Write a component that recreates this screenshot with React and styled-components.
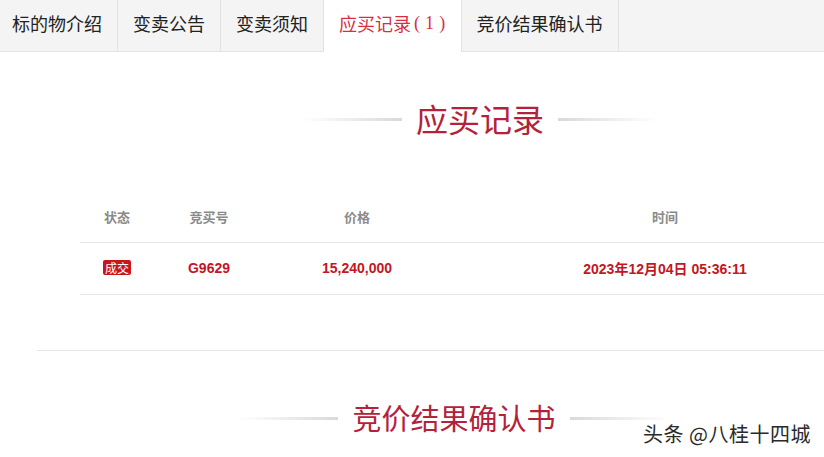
import React from "react";
import styled, { createGlobalStyle } from "styled-components";

const Global = createGlobalStyle`
  html, body { margin: 0; padding: 0; background: #fff; }
  body { font-family: "Microsoft YaHei", "Noto Sans CJK SC", "Liberation Sans", sans-serif; overflow: hidden; }
`;

const Page = styled.div`
  position: relative;
  width: 824px;
  height: 457px;
  overflow: hidden;
  background: #fff;
`;

const TabBar = styled.div`
  display: flex;
  height: 51px;
  background: #f4f4f4;
  border-bottom: 1px solid #e4e4e4;
  width: 900px;
`;

const Tab = styled.div`
  display: flex;
  align-items: center;
  padding: ${(p) => (p.$first ? "0 15px 6px 12px" : "0 15px 6px")};
  box-sizing: border-box;
  height: 52px;
  margin-bottom: -1px;
  font-size: 18px;
  color: ${(p) => (p.$active ? "#d62f3f" : "#222")};
  background: ${(p) => (p.$active ? "#fff" : "transparent")};
  border-right: 1px solid #e2e2e2;
  white-space: nowrap;
`;

const Count = styled.span`
  font-family: "Liberation Serif", serif;
  font-size: 18px;
  margin-left: 3px;
  letter-spacing: 0.3px;
  white-space: pre;
`;

const Content = styled.div`
  margin-left: 37px;
  width: 886px;
`;

const Heading = styled.div`
  display: flex;
  align-items: center;
  justify-content: center;
  gap: 14px;
  height: 32px;
  padding-top: 50px;
  padding-right: ${(p) => p.$shift || 0}px;
`;

const HeadLine = styled.span`
  width: 100px;
  height: 3px;
  margin-top: 2px;
  background: linear-gradient(
    ${(p) => (p.$right ? "to left" : "to right")},
    rgba(220, 220, 220, 0),
    #d9d9d9
  );
`;

const HeadText = styled.h2`
  margin: 0;
  font-weight: normal;
  font-size: ${(p) => p.$size}px;
  line-height: 1;
  color: #b3223a;
`;

const Spacer = styled.div`
  height: ${(p) => p.$h}px;
`;

const Table = styled.div`
  margin: 0 43px;
  width: 800px;
`;

const Row = styled.div`
  display: grid;
  grid-template-columns: 74px 110px 186px 430px;
  align-items: center;
  height: ${(p) => p.$h}px;
  border-bottom: 1px solid #e6e6e6;
  box-sizing: border-box;
`;

const Cell = styled.div`
  text-align: center;
  font-family: "Liberation Sans", "Noto Sans CJK SC", sans-serif;
  font-weight: bold;
  font-size: ${(p) => (p.$head ? 13 : 14)}px;
  color: ${(p) => (p.$head ? "#8a8a8a" : "#c4161f")};
  padding-bottom: ${(p) => (p.$head ? 0 : 2)}px;
  white-space: nowrap;
`;

const Badge = styled.span`
  display: inline-block;
  background: #c8161d;
  color: #fff;
  font-weight: normal;
  font-size: 12px;
  line-height: 15px;
  padding: 0 2px;
  border-radius: 2px;
  font-family: "Noto Sans CJK SC", sans-serif;
`;

const Divider = styled.div`
  height: 1px;
  background: #e6e6e6;
  margin-top: 55px;
`;

const Watermark = styled.div`
  position: absolute;
  right: 13px;
  bottom: 9px;
  font-size: 20px;
  letter-spacing: 0.5px;
  color: #2a2a2a;
  font-family: "Noto Sans CJK SC", sans-serif;
  text-shadow: 0 0 2px #fff, 0 0 2px #fff, 1px 1px 1px rgba(255, 255, 255, 0.9);
`;

const tabs = ["标的物介绍", "变卖公告", "变卖须知"];

export default function App() {
  return (
    <Page>
      <Global />
      <TabBar>
        {tabs.map((t, i) => (
          <Tab key={t} $first={i === 0}>
            {t}
          </Tab>
        ))}
        <Tab $active>
          应买记录<Count>( 1 )</Count>
        </Tab>
        <Tab>竞价结果确认书</Tab>
      </TabBar>
      <Content>
        <Heading>
          <HeadLine />
          <HeadText $size={32}>应买记录</HeadText>
          <HeadLine $right />
        </Heading>
        <Spacer $h={56} />
        <Table>
          <Row $h={53}>
            <Cell $head>状态</Cell>
            <Cell $head>竞买号</Cell>
            <Cell $head>价格</Cell>
            <Cell $head>时间</Cell>
          </Row>
          <Row $h={52}>
            <Cell>
              <Badge>成交</Badge>
            </Cell>
            <Cell>G9629</Cell>
            <Cell>15,240,000</Cell>
            <Cell>2023年12月04日 05:36:11</Cell>
          </Row>
        </Table>
        <Divider />
        <Heading $shift={52}>
          <HeadLine />
          <HeadText $size={29}>竞价结果确认书</HeadText>
          <HeadLine $right />
        </Heading>
      </Content>
      <Watermark>头条 @八桂十四城</Watermark>
    </Page>
  );
}
